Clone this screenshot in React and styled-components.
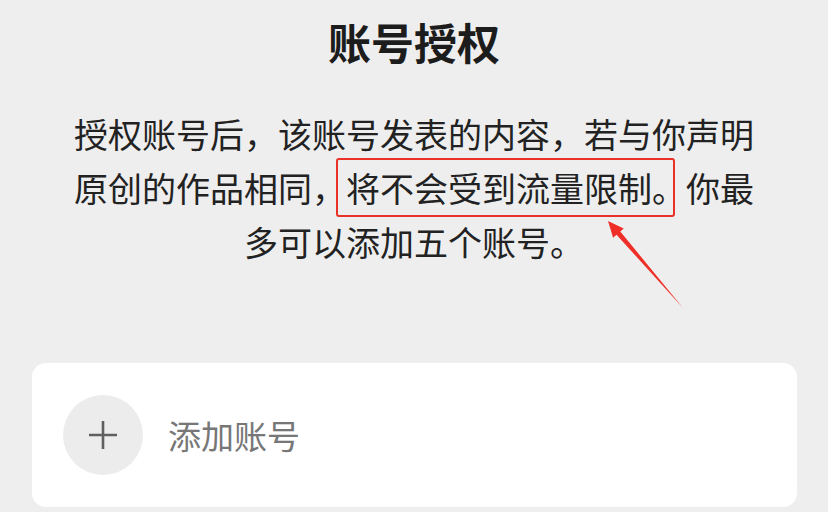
import React from 'react'
import styled, { createGlobalStyle } from 'styled-components'

const Global = createGlobalStyle`
  html, body {
    margin: 0;
    padding: 0;
    background: #eeeeee;
  }
  body {
    font-family: "Noto Sans CJK SC", "Noto Sans", sans-serif;
  }
`

const Page = styled.div`
  position: relative;
  width: 828px;
  height: 512px;
  overflow: hidden;
  padding-top: 13px;
  box-sizing: border-box;
  display: flex;
  flex-direction: column;
  align-items: center;
`

const Title = styled.h1`
  margin: 0;
  font-size: 43px;
  line-height: 56px;
  font-weight: 700;
  color: #1c1c1c;
`

const Desc = styled.p`
  margin: 38px 0 0;
  width: 690px;
  font-size: 34px;
  line-height: 54px;
  text-align: center;
  color: #222;
`

// red annotation frame drawn over the highlighted phrase
const Marked = styled.span`
  position: relative;
  display: inline-block;

  &::after {
    content: '';
    position: absolute;
    left: -10px;
    right: 11px;
    top: -3px;
    bottom: -2px;
    border: 2.5px solid #ea3128;
    border-radius: 3px;
    pointer-events: none;
  }
`

const Arrow = styled.svg`
  position: absolute;
  left: 600px;
  top: 215px;
  width: 90px;
  height: 100px;
`

const Card = styled.div`
  margin: 94px 31px 0 32px;
  align-self: stretch;
  height: 144px;
  background: #fff;
  border-radius: 14px;
  display: flex;
  align-items: center;
  padding-left: 31px;
  gap: 25px;
`

const AddCircle = styled.div`
  width: 80px;
  height: 80px;
  border-radius: 50%;
  background: #ececec;
  display: flex;
  align-items: center;
  justify-content: center;
`

const AddLabel = styled.span`
  font-size: 33px;
  color: #777;
`

export default function App() {
  return (
    <Page>
      <Global />
      <Title>账号授权</Title>
      <Desc>
        授权账号后，该账号发表的内容，若与你声明原创的作品相同，<Marked>将不会受到流量限制。</Marked>你最多可以添加五个账号。
      </Desc>
      <Arrow viewBox="0 0 90 100">
        <polygon
          points="8,6 23.7,13.5 20.3,16.5 83,93 16.5,19.7 13.1,22.7"
          fill="#ef2f27"
        />
      </Arrow>
      <Card>
        <AddCircle>
          <svg width="30" height="30" viewBox="0 0 30 30">
            <path d="M15 1v28M1 15h28" stroke="#5f5f5f" strokeWidth="2.6" />
          </svg>
        </AddCircle>
        <AddLabel>添加账号</AddLabel>
      </Card>
    </Page>
  )
}
